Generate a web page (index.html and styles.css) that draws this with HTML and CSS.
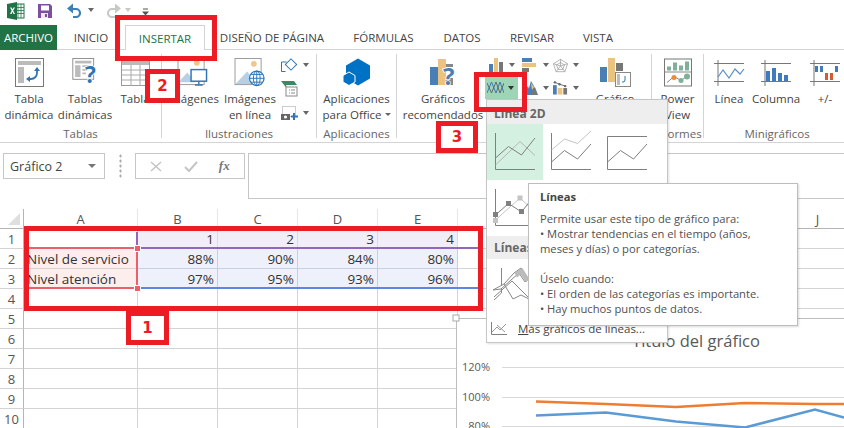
FILE: index.html
```html
<!DOCTYPE html>
<html lang="es">
<head>
<meta charset="utf-8">
<title>Excel - Insertar gráfico de líneas</title>
<link rel="stylesheet" href="styles.css">
</head>
<body>
<div class="app">
  <div class="qat">
    <svg class="q-xl" width="18" height="18" viewBox="0 0 18 18"><rect x="7" y="2" width="10" height="14" fill="#fff" stroke="#217346"/><path d="M11 2v14M14 2v14M7 5.500h10M7 8.500h10M7 11.500h10" stroke="#217346" stroke-width=".8"/><path d="M0 2l10-2v18L0 16z" fill="#217346"/><path d="M3 5.500l1.700 3L3 12h1.500l1-2.200 1 2.200H8L6.200 8.500 8 5.500H6.500l-1 2-1-2z" fill="#fff"/></svg>
    <svg class="q-save" width="14" height="14" viewBox="0 0 14 14"><path d="M0 0h12l2 2v12H0z" fill="#7e4f9f"/><rect x="3" y="1.500" width="8" height="5" fill="#fff"/><rect x="3" y="9" width="7" height="5" fill="#efe8f4"/><rect x="7" y="10" width="2" height="3" fill="#7e4f9f"/></svg>
    <svg class="q-undo" width="16" height="15" viewBox="0 0 16 15"><path d="M2 6h7a4 4 0 0 1 0 8H6" fill="none" stroke="#3e7fb8" stroke-width="2.200"/><path d="M6 .5v10L0 5.500z" fill="#3e7fb8"/></svg>
    <span class="arrow q-a1"></span>
    <svg class="q-redo" width="16" height="15" viewBox="0 0 16 15"><path d="M14 6H7a4 4 0 0 0 0 8h3" fill="none" stroke="#c8c8c8" stroke-width="2.200"/><path d="M10 .5v10l6-5z" fill="#c8c8c8"/></svg>
    <span class="arrow arrow-light q-a2"></span>
    <svg class="q-cust" width="7" height="8" viewBox="0 0 7 8"><path d="M1 1h5" stroke="#555"/><path d="M0 3.500h7L3.500 7.500z" fill="#555"/></svg>
  </div>

  <div class="tabs">
    <div class="tab tab-file">ARCHIVO</div>
    <div class="tab">INICIO</div>
    <div class="tab tab-active">INSERTAR</div>
    <div class="tab">DISEÑO DE PÁGINA</div>
    <div class="tab">FÓRMULAS</div>
    <div class="tab">DATOS</div>
    <div class="tab">REVISAR</div>
    <div class="tab">VISTA</div>
  </div>

  <div class="ribbon">
    <section class="group g-tablas">
      <div class="items">
        <div class="rbtn w56 first">
          <svg class="ico" width="29" height="29" viewBox="0 0 29 29"><rect x=".5" y=".5" width="28" height="28" fill="#fff" stroke="#777"/><rect x="3" y="3" width="23" height="4" fill="#bbb"/><rect x="3" y="9" width="6" height="16" fill="#bbb"/><path d="M22 11v4a6 6 0 0 1-6 6h-3" fill="none" stroke="#2f75b5" stroke-width="1.800"/><path d="M19 13l3-4 3 4zM15 18v6l-4-3z" fill="#2f75b5"/></svg>
          <span>Tabla<br>dinámica</span>
        </div>
        <div class="rbtn w56">
          <svg class="ico" width="29" height="32" viewBox="0 0 29 32"><rect x=".5" y=".5" width="23" height="23" fill="#fff" stroke="#888"/><rect x="3" y="3" width="18" height="3" fill="#bbb"/><path d="M3 8h6v13H3zM11 8h9v2h-9zM11 12h5v2h-5zM11 16h4v2h-4z" fill="#bbb"/><text class="qmark" x="14" y="28">?</text></svg>
          <span>Tablas<br>dinámicas</span>
        </div>
        <div class="rbtn w44">
          <svg class="ico" width="29" height="27" viewBox="0 0 29 27"><rect x=".5" y=".5" width="28" height="26" fill="#fff" stroke="#999"/><rect x="1" y="1" width="27" height="5" fill="#bbb"/><path d="M1 11h27M1 16h27M1 21h27M10 6v21M19 6v21" stroke="#aaa"/></svg>
          <span>Tabla</span>
        </div>
      </div>
      <div class="glabel">Tablas</div>
    </section>

    <section class="group g-ilus">
      <div class="items">
        <div class="rbtn w62">
          <svg class="ico" width="32" height="30" viewBox="0 0 32 30"><rect x=".5" y=".5" width="27" height="27" fill="#fff" stroke="#999"/><circle cx="20" cy="5" r="3" fill="#f0c78a"/><path d="M1 25l9-10 9 10z" fill="#b8cfe4"/><rect x="14" y="12" width="16" height="12" fill="#fff" stroke="#2f75b5" stroke-width="1.500"/><path d="M22 24v3M18 28h8" stroke="#2f75b5" stroke-width="1.500"/></svg>
          <span>Imágenes</span>
        </div>
        <div class="rbtn w52">
          <svg class="ico" width="32" height="30" viewBox="0 0 32 30"><rect x=".5" y=".5" width="27" height="27" fill="#fff" stroke="#999"/><circle cx="20" cy="6" r="3" fill="#f0c78a"/><path d="M1 27l12-13 11 13z" fill="#b8cfe4"/><circle cx="23" cy="21" r="7.500" fill="#fff" stroke="#2f75b5" stroke-width="1.300"/><path d="M15.500 21h15M23 13.500v15M17 17h12M17 25h12" stroke="#2f75b5"/><ellipse cx="23" cy="21" rx="3.500" ry="7.500" fill="none" stroke="#2f75b5"/></svg>
          <span>Imágenes<br>en línea</span>
        </div>
        <div class="minis-col">
          <div class="mini-row">
            <svg width="17" height="15" viewBox="0 0 17 15"><path d="M.5 4h5M.5 4v9.500h4" fill="none" stroke="#2f75b5"/><rect x="6" y="2.500" width="8" height="8" transform="rotate(45 10 6.500)" fill="#fff" stroke="#2f75b5"/></svg>
            <span class="arrow"></span>
          </div>
          <div class="mini-row">
            <svg width="17" height="16" viewBox="0 0 17 16"><path d="M0 0h13l3 4H5L7 9z" fill="#3c8a64"/><rect x="5" y="6" width="11" height="9" fill="#fff" stroke="#888"/><path d="M8 9h1M8 12h1M10 9h4M10 12h4" stroke="#888"/></svg>
          </div>
          <div class="mini-row">
            <svg width="17" height="15" viewBox="0 0 17 15"><rect x="1.500" y=".5" width="13" height="10" fill="none" stroke="#999" stroke-dasharray="1 1"/><rect x="0" y="8" width="9" height="6" fill="#666"/><circle cx="4.500" cy="11" r="1.600" fill="#fff"/><path d="M13 7v7M10 10.500h7" stroke="#2f75b5" stroke-width="2"/></svg>
            <span class="arrow"></span>
          </div>
        </div>
      </div>
      <div class="glabel">Ilustraciones</div>
    </section>

    <section class="group g-apps">
      <div class="items">
        <div class="rbtn w80">
          <svg class="ico" width="28" height="29" viewBox="0 0 28 29"><path d="M15 .5l12 7v13l-12 7-12-7v-13z" fill="#0072c6"/><path d="M6 14l6 3.500v6.500l-6 3.500-6-3.500v-6.500z" fill="#0072c6" stroke="#fff"/></svg>
          <span>Aplicaciones<br>para Office<i class="arrow arrow-sm"></i></span>
        </div>
      </div>
      <div class="glabel">Aplicaciones</div>
    </section>

    <section class="group g-graf">
      <div class="items">
        <div class="rbtn w92">
          <svg class="ico" width="30" height="29" viewBox="0 0 30 29"><rect x="2" y="9" width="8" height="18" fill="#4a7fb5"/><rect x="10" y="1" width="8" height="26" fill="#ebc37f"/><rect x="18" y="6" width="7" height="3" fill="#888"/><rect x="18" y="20" width="7" height="7" fill="#888"/><text class="qmark qmark-lg" x="15" y="27">?</text></svg>
          <span>Gráficos<br>recomendados</span>
        </div>
        <div class="chart-types">
          <div class="ct">
            <svg width="15" height="15" viewBox="0 0 15 15"><rect x="0" y="6" width="4" height="9" fill="#4a7fb5"/><rect x="5" y="0" width="4" height="15" fill="#ebc37f"/><rect x="10" y="4" width="4" height="11" fill="#777"/></svg>
            <span class="arrow"></span>
          </div>
          <div class="ct">
            <svg width="16" height="15" viewBox="0 0 16 15"><rect x="0" y="0" width="10" height="4" fill="#4a7fb5"/><rect x="0" y="5" width="14" height="4" fill="#ebc37f"/><rect x="0" y="10" width="7" height="4" fill="#777"/></svg>
            <span class="arrow"></span>
          </div>
          <div class="ct">
            <svg width="17" height="15" viewBox="0 0 17 15"><path d="M8.500 .5l8 5-3 9h-10l-3-9zM8.500 4l4.500 3-2 5H6L4 7zM8.500 .5V8M.5 5.500l8 2.500 8-2.500M3.500 14.500l5-6.500 5 6.500" fill="none" stroke="#999" stroke-width=".8"/></svg>
            <span class="arrow"></span>
          </div>
          <div class="ct ct-line">
            <svg width="17" height="15" viewBox="0 0 17 15"><path d="M0 13L4.500 2 9 13l4-11 4 11" fill="none" stroke="#3a78b8"/><path d="M0 3l4.500 10L9 2l4 11 4-10" fill="none" stroke="#666"/></svg>
            <span class="arrow arrow-dark"></span>
          </div>
          <div class="ct">
            <svg width="16" height="15" viewBox="0 0 16 15"><path d="M0 15l6-9 3 9z" fill="#4a7fb5"/><path d="M5 15l4-14 3 5 3 9z" fill="#4a7fb5"/><path d="M9 15l4-8 3 8z" fill="#777"/><path d="M9 3l3 4-2 3z" fill="#ebc37f"/></svg>
            <span class="arrow"></span>
          </div>
          <div class="ct">
            <svg width="16" height="15" viewBox="0 0 16 15"><rect x="0" y="5" width="4" height="10" fill="#4a7fb5"/><rect x="5" y="8" width="5" height="7" fill="#ebc37f"/><rect x="11" y="8" width="4" height="7" fill="#777"/><path d="M2 2l5 2 6 2" stroke="#666" fill="none"/><circle cx="2" cy="2" r="1.300" fill="#666"/><circle cx="7" cy="4" r="1.300" fill="#666"/><circle cx="13" cy="6" r="1.300" fill="#666"/></svg>
            <span class="arrow"></span>
          </div>
        </div>
        <div class="rbtn w72">
          <svg class="ico" width="31" height="29" viewBox="0 0 31 29"><rect x="0" y="9" width="7" height="15" fill="#4a7fb5"/><rect x="8" y="0" width="7" height="24" fill="#ebc37f"/><rect x="16" y="5" width="7" height="8" fill="#777"/><rect x="15.500" y="14.500" width="15" height="14" fill="#fff" stroke="#888"/><rect x="17" y="16" width="3" height="11" fill="#bbb"/><path d="M25 18v4a2 2 0 0 1-2 2h-1" fill="none" stroke="#2f75b5"/></svg>
          <span>Gráfico<br>dinámico</span>
        </div>
      </div>
      <div class="glabel">Gráficos</div>
    </section>

    <section class="group g-inf">
      <div class="items">
        <div class="rbtn wfull">
          <svg class="ico" width="28" height="28" viewBox="0 0 28 28"><rect x=".5" y=".5" width="27" height="27" fill="#fff" stroke="#777"/><path d="M1 13.500h26" stroke="#888"/><path d="M3 8h4v4H3zM9 4h4v8H9zM15 7h4v5h-4zM21 3h4v9h-4z" fill="#7fb09a"/><path d="M3 24l7-6 7 4 7-5" fill="none" stroke="#888"/><circle cx="10" cy="19" r="2.500" fill="#ed8a3a"/><circle cx="17" cy="22" r="2.500" fill="#7fb09a"/><circle cx="23" cy="18" r="3" fill="#7fb09a"/></svg>
          <span>Power<br>View</span>
        </div>
      </div>
      <div class="glabel">Informes</div>
    </section>

    <section class="group g-mini">
      <div class="items">
        <div class="rbtn w50">
          <svg class="ico" width="30" height="27" viewBox="0 0 30 27"><path d="M0 4.500h30M0 22.500h30M4 1v26" stroke="#777"/><path d="M4 18l5-7 6 8 6-9 5 5 4-5" fill="none" stroke="#5b8fc7" stroke-width="1.200"/></svg>
          <span>Línea</span>
        </div>
        <div class="rbtn w44">
          <svg class="ico" width="30" height="27" viewBox="0 0 30 27"><path d="M0 4.500h30M0 22.500h30M4 1v26" stroke="#777"/><path d="M5 12h4v10H5zM11 9h4v13h-4zM17 14h4v8h-4zM23 16h4v6h-4z" fill="#3f7cbf"/></svg>
          <span>Columna</span>
        </div>
        <div class="rbtn w54">
          <svg class="ico" width="30" height="27" viewBox="0 0 30 27"><path d="M0 4.500h30M0 22.500h30M4 1v26" stroke="#777"/><path d="M5 7h3v6H5zM10 7h3v6h-3zM25 7h3v6h-3z" fill="#3f7cbf"/><path d="M15 14h3v7h-3zM20 14h3v7h-3z" fill="#d65a31"/></svg>
          <span>+/-</span>
        </div>
      </div>
      <div class="glabel">Minigráficos</div>
    </section>
  </div>

  <div class="formula">
    <div class="namebox"><span>Gráfico 2</span><i class="arrow arrow-name"></i></div>
    <div class="fdots"></div>
    <div class="fxbox">
      <svg width="13" height="11" viewBox="0 0 13 11"><path d="M1 1l10 9M11 1L1 10" stroke="#c4c4c4" stroke-width="1.500"/></svg>
      <svg width="14" height="11" viewBox="0 0 14 11"><path d="M1 6l4 4 8-9" fill="none" stroke="#c4c4c4" stroke-width="2"/></svg>
      <span class="fx">fx</span>
    </div>
    <div class="finput"></div>
  </div>

  <div class="sheet">
    <table class="cells">
      <colgroup><col class="c0"><col class="ca"><col class="cn"><col class="cn"><col class="cn"><col class="cn"><col class="cn"><col class="cn"><col class="cn"><col class="cn"><col class="cn"></colgroup>
      <tr class="hdr"><th class="corner"><i></i></th><th>A</th><th>B</th><th>C</th><th>D</th><th>E</th><th>F</th><th>G</th><th>H</th><th>I</th><th>J</th></tr>
      <tr><th>1</th><td></td><td class="n purple">1</td><td class="n purple">2</td><td class="n purple">3</td><td class="n purple">4</td><td></td><td></td><td></td><td></td><td></td></tr>
      <tr><th>2</th><td class="pink">Nivel de servicio</td><td class="n blue">88%</td><td class="n blue">90%</td><td class="n blue">84%</td><td class="n blue">80%</td><td></td><td></td><td></td><td></td><td></td></tr>
      <tr><th>3</th><td class="pink">Nivel atención</td><td class="n blue">97%</td><td class="n blue">95%</td><td class="n blue">93%</td><td class="n blue">96%</td><td></td><td></td><td></td><td></td><td></td></tr>
      <tr><th>4</th><td></td><td></td><td></td><td></td><td></td><td></td><td></td><td></td><td></td><td></td></tr>
      <tr><th>5</th><td></td><td></td><td></td><td></td><td></td><td></td><td></td><td></td><td></td><td></td></tr>
      <tr><th>6</th><td></td><td></td><td></td><td></td><td></td><td></td><td></td><td></td><td></td><td></td></tr>
      <tr><th>7</th><td></td><td></td><td></td><td></td><td></td><td></td><td></td><td></td><td></td><td></td></tr>
      <tr><th>8</th><td></td><td></td><td></td><td></td><td></td><td></td><td></td><td></td><td></td><td></td></tr>
      <tr><th>9</th><td></td><td></td><td></td><td></td><td></td><td></td><td></td><td></td><td></td><td></td></tr>
      <tr><th>10</th><td></td><td></td><td></td><td></td><td></td><td></td><td></td><td></td><td></td><td></td></tr>
    </table>
    <div class="rng rng-purple-h"></div>
    <div class="rng rng-purple-v"></div>
    <div class="rng rng-red-t"></div>
    <div class="rng rng-red-b"></div>
    <div class="rng rng-red-v"></div>
    <div class="rng rng-blue"></div>
    <div class="handle h1"></div>
    <div class="handle h2"></div>
  </div>

  <div class="chart">
    <svg width="388" height="110" viewBox="0 0 388 110">
      <path d="M0 .5h388M.5 0v110" stroke="#bdbdbd" fill="none"/>
      <rect x="-3" y="-3" width="6" height="6" fill="#fff" stroke="#aaa"/>
      <path d="M46 49.500h342M46 79.500h342M46 108.500h342" stroke="#d9d9d9"/>
      <text class="ch-title" x="240" y="29" text-anchor="middle">Título del gráfico</text>
      <text class="ch-ax" x="34" y="53" text-anchor="end">120%</text>
      <text class="ch-ax" x="34" y="83" text-anchor="end">100%</text>
      <text class="ch-ax" x="34" y="112" text-anchor="end">80%</text>
      <path d="M80 83.500l70 2.500 70 3 69-4 70 1 29 0" fill="none" stroke="#ed7d31" stroke-width="2.500"/>
      <path d="M80 97.500l70-3 70 9 69 6 70-18 29 8" fill="none" stroke="#5b9bd5" stroke-width="2.500"/>
    </svg>
  </div>

  <div class="dropdown">
    <div class="dd-head">Línea 2D</div>
    <div class="dd-tiles">
      <div class="tile tile-on">
        <svg width="56" height="56" viewBox="0 0 56 56"><path d="M8.500 9v36.500H48" fill="none" stroke="#808080"/><path d="M8.500 41L33 17.500l15 14" fill="none" stroke="#b5b5b5"/><path d="M8.500 34l13-11.500 13 8.500L48 14" fill="none" stroke="#808080"/></svg>
      </div>
      <div class="tile">
        <svg width="56" height="56" viewBox="0 0 56 56"><path d="M8.500 9v36.500H48" fill="none" stroke="#808080"/><path d="M8.500 26l13-11 13 4.500L48 7" fill="none" stroke="#c4c4c4"/><path d="M8.500 38l13-11.500 13 8.500L48 20" fill="none" stroke="#808080"/></svg>
      </div>
      <div class="tile">
        <svg width="56" height="56" viewBox="0 0 56 56"><path d="M48 12.500H8.500v33H48" fill="none" stroke="#808080"/><path d="M8.500 38l13-11.500 13 8.500L48 20" fill="none" stroke="#808080"/></svg>
      </div>
      <div class="tile">
        <svg width="56" height="56" viewBox="0 0 56 56"><path d="M8.500 9v36.500H48" fill="none" stroke="#808080"/><path d="M8.500 40L33 18l15 14" fill="none" stroke="#c4c4c4"/><path d="M8.500 35l13-11.500 13 8.500L48 15" fill="none" stroke="#808080"/><path d="M6 37h5v-5H6zM19 26h5v-5h-5zM32 34h5v-5h-5z" fill="#808080"/><path d="M6 43h5v-5H6zM30.500 20.500h5v-5h-5z" fill="#c4c4c4"/></svg>
      </div>
    </div>
    <div class="dd-head dd-head-3d">Líneas 3D</div>
    <div class="dd-3d">
      <svg width="56" height="46" viewBox="0 0 56 46"><path d="M14.500 8v25M7 37l18-16 16 16M14.500 33l-7.500 7" fill="none" stroke="#888"/><path d="M6 30l11-6 10-11 7-5 7 11-3 3-6-9-8 7-10 9z" fill="#fff" stroke="#888"/><path d="M28 13l7-5 7 11-3 3-5-8-4 3z" fill="#bbb" stroke="#aaa" stroke-width=".5"/><path d="M17 24l9 15 8-4 8 4" fill="none" stroke="#888"/></svg>
    </div>
    <div class="dd-more">
      <svg width="16" height="13" viewBox="0 0 16 13"><path d="M.5 0v12.500H16" fill="none" stroke="#808080"/><path d="M1 10l5-5 3 3 6-6M6 3l8 7" fill="none" stroke="#999"/></svg>
      <span><u>M</u>ás gráficos de líneas...</span>
    </div>
  </div>

  <div class="tooltip">
    <div class="tt-title">Líneas</div>
    <p>Permite usar este tipo de gráfico para:<br>• Mostrar tendencias en el tiempo (años,<br>meses y días) o por categorías.</p>
    <p>Úselo cuando:<br>• El orden de las categorías es importante.<br>• Hay muchos puntos de datos.</p>
  </div>

  <div class="mark mark-tab"></div>
  <div class="mark mark-line"></div>
  <div class="mark mark-range"></div>
  <div class="mark mark-n n1">1</div>
  <div class="mark mark-n n2">2</div>
  <div class="mark mark-n n3">3</div>
</div>
</body>
</html>
```
FILE: styles.css
```css
* { box-sizing: border-box; }
html, body { margin: 0; padding: 0; background: #fff; }
body { width: 844px; height: 428px; overflow: hidden; font-family: "Open Sans", "Noto Sans", sans-serif; color: #444; }
.app { position: relative; width: 844px; height: 428px; overflow: hidden; }

.arrow { display: inline-block; width: 0; height: 0; border-left: 3.5px solid transparent; border-right: 3.5px solid transparent; border-top: 4px solid #666; }
.arrow-light { border-top-color: #c8c8c8; }
.arrow-dark { border-top-color: #333; }
.arrow-sm { border-left-width: 3px; border-right-width: 3px; border-top-width: 3px; margin-left: 3px; vertical-align: 3px; }

.qat { display: flex; align-items: center; height: 25px; padding-left: 7px; }
.q-save { margin-left: 13px; margin-top: -3px; }
.q-undo { margin-left: 15px; margin-top: -5px; }
.q-a1 { margin-left: 5px; margin-top: -5px; }
.q-redo { margin-left: 11px; margin-top: -5px; }
.q-a2 { margin-left: 4px; margin-top: -5px; }
.q-xl { margin-top: -3px; }
.q-cust { margin-left: 11px; margin-top: -1px; }

.tabs { display: grid; grid-template-columns: 57px 68px 80px 134px 89px 68px 72px 60px; height: 25px; border-bottom: 1px solid #d4d4d4; font-size: 11.5px; }
.tab { display: flex; align-items: center; justify-content: center; height: 25px; color: #444; }
.tab-file { background: #217346; color: #fff; }
.tab-active { background: #fff; border: 1px solid #d4d4d4; border-bottom: 0; color: #217346; height: 25px; position: relative; }

.ribbon { display: flex; height: 93px; padding-top: 4px; border-bottom: 1px solid #d4d4d4; font-size: 11.5px; line-height: 16px; }
.group { display: flex; flex-direction: column; height: 84px; border-right: 1px solid #d4d4d4; flex: none; }
.g-tablas { width: 162px; }
.g-ilus { width: 155px; }
.g-apps { width: 80px; }
.g-graf { width: 255px; }
.g-inf { width: 52px; }
.g-mini { width: 146px; border-right: 0; }
.items { display: flex; height: 72px; }
.glabel { text-align: center; color: #666; height: 12px; }
.rbtn { display: flex; flex-direction: column; align-items: center; text-align: center; flex: none; }
.rbtn .ico { height: 29px; margin-top: 4px; margin-bottom: 4px; flex: none; overflow: visible; }
.rbtn span { display: block; white-space: nowrap; }
.first { margin-left: 1px; }
.w44 { width: 44px; }
.w50 { width: 50px; }
.w52 { width: 52px; }
.w54 { width: 54px; }
.w56 { width: 56px; }
.w62 { width: 62px; }
.w72 { width: 72px; }
.w80 { width: 79px; }
.w92 { width: 92px; }
.wfull { width: 51px; }
.qmark { font: bold 25px "Open Sans", sans-serif; fill: #2f75b5; stroke: #fff; stroke-width: 1.5px; paint-order: stroke; }
.qmark-lg { font-size: 24px; fill: #4a7fb5; }
.minis-col { display: flex; flex-direction: column; gap: 8px; padding: 3px 0 0 5px; }
.mini-row { display: flex; align-items: center; gap: 5px; height: 16px; }

.chart-types { display: grid; grid-template-columns: 33px 31px 30px; grid-template-rows: 22px 23px; flex: none; margin-left: -4px; }
.ct { display: flex; align-items: center; justify-content: flex-start; gap: 5px; padding-left: 4px; }
.ct-line { background: #9fd5b7; padding-left: 2px; gap: 4px; }

.formula { position: relative; display: flex; height: 66px; padding: 10px 0 0 3px; }
.namebox { width: 102px; height: 26px; border: 1px solid #c6c6c6; display: flex; align-items: center; justify-content: space-between; padding: 0 8px 0 6px; font-size: 12.5px; }
.arrow-name { border-left-width: 4px; border-right-width: 4px; border-top-color: #777; }
.fdots { width: 30px; height: 26px; background: radial-gradient(circle, #aaa 1px, transparent 1.3px) center / 3px 5px repeat-y; flex: none; }
.fxbox { width: 110px; height: 26px; border: 1px solid #c6c6c6; display: flex; align-items: center; justify-content: space-around; padding: 0 4px; }
.fx { font: italic bold 13px "Liberation Serif", serif; color: #777; }
.finput { flex: 1; height: 46px; margin-left: 3px; border: 1px solid #c6c6c6; border-right: 0; }

.sheet { position: relative; height: 219px; }
.cells { border-collapse: separate; border-spacing: 0; table-layout: fixed; width: 834px; font-size: 13.5px; }
.c0 { width: 24px; }
.ca { width: 114px; }
.cn { width: 80px; }
.cells tr { height: 20px; }
.cells th, .cells td { height: 20px; padding: 0; border-right: 1px solid #d4d4d4; border-bottom: 1px solid #d4d4d4; font-weight: 400; }
.cells th { text-align: center; font-size: 13px; color: #555; }
.cells tr th:first-child { border-right-color: #b5b5b5; }
.hdr th { border-right-color: #e6e6e6; border-bottom-color: #b5b5b5; }
.corner { position: relative; }
.corner i { position: absolute; left: 8px; top: 4px; width: 0; height: 0; border-left: 12px solid transparent; border-bottom: 12px solid #dfdfdf; }
.cells td { padding: 0 3px; white-space: nowrap; color: #333; line-height: 18px; overflow: visible; }
.n { text-align: right; }
.purple { background: #f1eef8; border-color: #dcd7ea !important; }
.blue { background: #eef1fb; border-color: #c9cfe2 !important; }
.pink { background: #fdeeed; }

.rng { position: absolute; }
.rng-purple-h { left: 139px; top: 38px; width: 344px; height: 2px; background: #8f67bd; }
.rng-purple-v { left: 136px; top: 23px; width: 2px; height: 15px; background: #8f67bd; }
.rng-red-t { left: 29px; top: 38px; width: 108px; height: 2px; background: #e8606a; }
.rng-red-b { left: 29px; top: 78px; width: 108px; height: 2px; background: #e8606a; }
.rng-red-v { left: 136px; top: 39px; width: 2px; height: 40px; background: #e8606a; }
.rng-blue { left: 139px; top: 78px; width: 344px; height: 2px; background: #5b87e0; }
.handle { position: absolute; width: 5px; height: 5px; background: #e8606a; box-shadow: 0 0 0 1px #fff; }
.h1 { left: 135px; top: 37px; }
.h2 { left: 135px; top: 77px; }

.chart { position: absolute; left: 456px; top: 318px; width: 388px; height: 110px; background: #fff; }
.chart svg { display: block; overflow: visible; }
.ch-title { font: 16.5px "Open Sans", sans-serif; fill: #595959; }
.ch-ax { font: 11px "Open Sans", sans-serif; fill: #595959; }

.dropdown { position: absolute; left: 486px; top: 99px; width: 182px; height: 244px; background: #fff; border: 1px solid #c6c6c6; box-shadow: 1px 1px 2px rgba(0,0,0,.12); }
.dd-head { height: 24px; background: #eee; font-size: 12px; font-weight: 700; color: #666; line-height: 27px; padding-left: 7px; }
.dd-tiles { display: grid; grid-template-columns: repeat(3, 56px); grid-auto-rows: 56px; }
.tile svg { display: block; }
.tile-on { background: #d3f0e0; }
.dd-head-3d { height: 23px; line-height: 23px; }
.dd-3d svg { display: block; margin-top: 1px; }
.dd-more { display: flex; align-items: center; gap: 11px; padding-left: 4px; margin-top: 15px; font-size: 11.5px; white-space: nowrap; }
.dd-more svg { flex: none; }

.tooltip { position: absolute; left: 528px; top: 183px; width: 270px; height: 143px; background: #fff; border: 1px solid #bdbdbd; box-shadow: 1px 1px 2px rgba(0,0,0,.15); padding: 5px 11px; font-size: 11.2px; line-height: 15px; color: #505050; }
.tt-title { font-weight: 700; line-height: 16px; margin-bottom: 6px; color: #444; }
.tooltip p { margin: 0 0 15px; white-space: nowrap; }

.mark { position: absolute; border: 5px solid #ed1c24; }
.mark-tab { left: 115px; top: 15px; width: 102px; height: 46px; }
.mark-line { left: 474px; top: 72px; width: 53px; height: 40px; }
.mark-range { left: 24px; top: 226px; width: 459px; height: 85px; border-width: 5.5px; }
.mark-n { display: flex; align-items: center; justify-content: center; background: #fff; color: #ed1c24; font: 700 15px "DejaVu Sans", sans-serif; }
.n1 { left: 126px; top: 311px; width: 43px; height: 34px; }
.n2 { left: 145px; top: 69px; width: 35px; height: 34px; }
.n3 { left: 436px; top: 121px; width: 42px; height: 32px; }
```
